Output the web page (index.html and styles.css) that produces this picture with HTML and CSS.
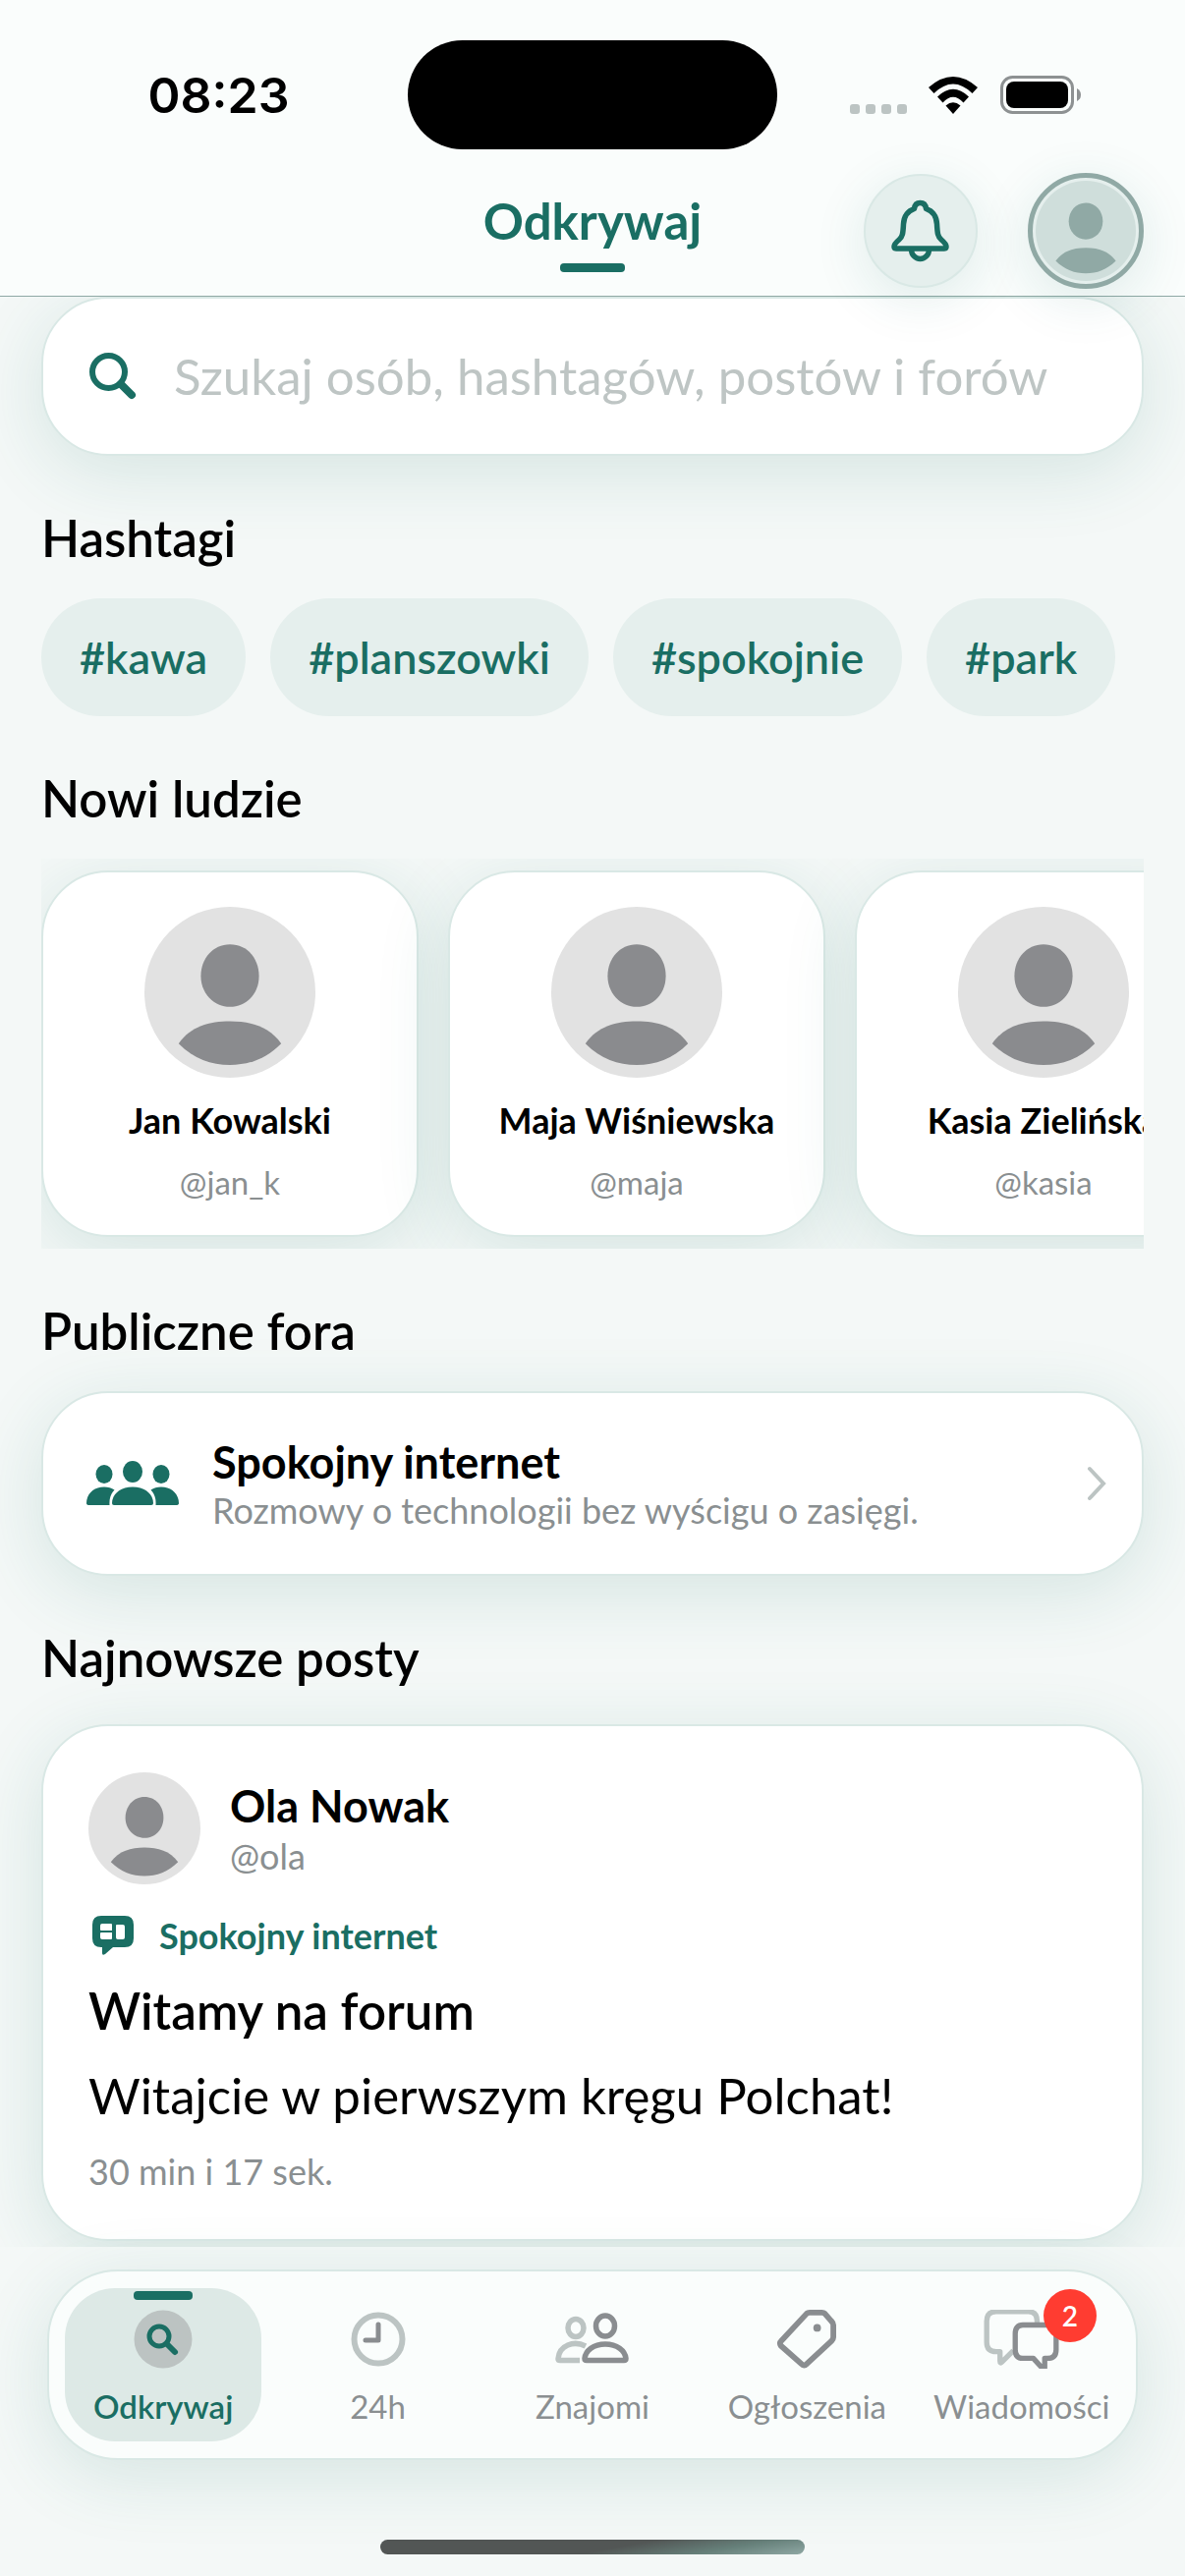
FILE: index.html
```html
<!DOCTYPE html>
<html lang="pl">
<head>
<meta charset="UTF-8">
<meta name="viewport" content="width=device-width, initial-scale=1">
<title>Odkrywaj</title>
<link rel="stylesheet" href="styles.css">
</head>
<body>

<!-- shared shapes -->
<svg class="defs" aria-hidden="true">
  <symbol id="person" viewBox="0 0 100 100">
    <path d="M50 22c10 0 17 8 17 18.500S59.500 58.500 50 58.500 33 50.500 33 40.500 40 22 50 22z"/>
    <path d="M20 80C27 70 38 67 50 67s23 3 30 13c-9 9-19 12.500-30 12.500S29 89 20 80z"/>
  </symbol>
</svg>

<header class="header">
  <div class="status">
    <span class="time">08:23</span>
    <div class="island"></div>
    <div class="status-icons">
      <svg class="signal" viewBox="0 0 58 10"><rect width="10" height="10" rx="3"/><rect x="16" width="10" height="10" rx="3"/><rect x="32" width="10" height="10" rx="3"/><rect x="48" width="10" height="10" rx="3"/></svg>
      <svg class="wifi" viewBox="0 0 50 38">
        <path d="M0 11Q25-11 50 11l-5.500 6Q25-2 5.500 17z"/>
        <path d="M9 20.500Q25 5 41 20.500l-5.500 6Q25 15 14.500 26.500z"/>
        <path d="M17.500 29.500Q25 23 32.500 29.500L25 38z"/>
      </svg>
      <svg class="battery" viewBox="0 0 82 39">
        <rect x="1.500" y="1.500" width="72" height="36" rx="11" fill="none" stroke="#8d9192" stroke-width="3"/>
        <rect x="6" y="6" width="63" height="27" rx="8"/>
        <path d="M78 13q4 2 4 6.500T78 26z" fill="#8d9192"/>
      </svg>
    </div>
  </div>
  <div class="nav">
    <h1 class="title">Odkrywaj</h1>
    <div class="nav-buttons">
      <button class="bell" aria-label="Powiadomienia">
        <svg viewBox="0 0 60 64" fill="none" stroke="currentColor" stroke-width="5.500" stroke-linejoin="round">
          <path d="M23.500 9.500C24 5 26.500 3.500 29.500 3.500S35 5 35.500 9.500C43 12 46 17 46.500 25c.5 10 1 13 4.500 16 3 2.500 5 5 5 7q0 2-2 2H5q-2 0-2-2c0-2 2-4.500 5-7 3.500-3 4-6 4.500-16C13 17 16 12 23.500 9.500z"/>
          <path d="M20.500 51a9 9.500 0 0 0 18 0"/>
        </svg>
      </button>
      <button class="profile" aria-label="Profil"><svg class="avatar"><use href="#person"/></svg></button>
    </div>
  </div>
</header>

<main class="content">
  <div class="card search">
    <label for="q" aria-label="Szukaj">
      <svg class="search-icon" viewBox="0 0 48 48" fill="none" stroke="currentColor">
        <circle cx="19.500" cy="19.500" r="16.500" stroke-width="6"/>
        <path d="M32 32l11 11" stroke-width="8" stroke-linecap="round"/>
      </svg>
    </label>
    <input type="search" id="q" placeholder="Szukaj osób, hashtagów, postów i forów">
  </div>

  <section>
    <h2>Hashtagi</h2>
    <div class="chips">
      <button class="chip">#kawa</button>
      <button class="chip">#planszowki</button>
      <button class="chip">#spokojnie</button>
      <button class="chip">#park</button>
    </div>
  </section>

  <section>
    <h2>Nowi ludzie</h2>
    <div class="people">
      <article class="card person">
        <svg class="avatar"><use href="#person"/></svg>
        <strong>Jan Kowalski</strong>
        <span class="handle">@jan_k</span>
      </article>
      <article class="card person">
        <svg class="avatar"><use href="#person"/></svg>
        <strong>Maja Wiśniewska</strong>
        <span class="handle">@maja</span>
      </article>
      <article class="card person">
        <svg class="avatar"><use href="#person"/></svg>
        <strong>Kasia Zielińska</strong>
        <span class="handle">@kasia</span>
      </article>
    </div>
  </section>

  <section>
    <h2>Publiczne fora</h2>
    <a class="card forum" href="#">
      <svg class="group" viewBox="0 0 94 46">
        <ellipse cx="18" cy="13.500" rx="8.500" ry="9.500"/>
        <ellipse cx="76" cy="13.500" rx="8.500" ry="9.500"/>
        <ellipse cx="47" cy="11" rx="10" ry="11"/>
        <path d="M0 43c0-9 7-16.500 18-16.500 4 0 7.500 1 10.500 3C25 33 23 38 23.500 45H3q-3 0-3-2z"/>
        <path d="M94 43c0-9-7-16.500-18-16.500-4 0-7.500 1-10.500 3C69 33 71 38 70.500 45H91q3 0 3-2z"/>
        <path d="M26 43c0-8 7-16.500 21-16.500S68 35 68 43q0 2-2 2H28q-2 0-2-2z"/>
      </svg>
      <div class="forum-text">
        <strong>Spokojny internet</strong>
        <span class="muted">Rozmowy o technologii bez wyścigu o zasięgi.</span>
      </div>
      <svg class="chevron" viewBox="0 0 20 36"><path d="M3 3l14 15L3 33"/></svg>
    </a>
  </section>

  <section>
    <h2>Najnowsze posty</h2>
    <article class="card post">
      <div class="author">
        <svg class="avatar"><use href="#person"/></svg>
        <div class="author-text">
          <strong>Ola Nowak</strong>
          <span class="muted">@ola</span>
        </div>
      </div>
      <a class="post-forum" href="#">
        <svg viewBox="0 0 42 40"><path fill-rule="evenodd" d="M9 0h24q9 0 9 9v14q0 9-9 9H21l-8 7q-3 2-3-1v-6H9q-9 0-9-9V9q0-9 9-9zm1 8q-2 0-2 2v4q0 1 1 1h11V9q0-1-1-1zm14 2v12q0 2 2 2h5q2 0 2-2V11q0-2-2-2h-6q-1 0-1 1zM9 17q-1 0-1 1v4q0 2 2 2h9q1 0 1-1v-6z"/></svg>
        Spokojny internet
      </a>
      <h3>Witamy na forum</h3>
      <p>Witajcie w pierwszym kręgu Polchat!</p>
      <time class="muted">30 min i 17 sek.</time>
    </article>
  </section>
</main>

<footer class="footer">
  <nav class="tabs">
    <a class="tab active" href="#">
      <svg viewBox="0 0 60 60" fill="none" stroke="currentColor">
        <circle cx="30" cy="30" r="29.500" fill="#bcc3c2" stroke="none"/>
        <circle cx="26" cy="27" r="10" stroke-width="5"/>
        <path d="M34 35l8 8" stroke-width="6" stroke-linecap="round"/>
      </svg>
      Odkrywaj
    </a>
    <a class="tab" href="#">
      <svg viewBox="0 0 60 60" fill="none" stroke-linecap="round" stroke-linejoin="round">
        <circle cx="30" cy="30" r="24.500" stroke="#bcc4c3" stroke-width="6"/>
        <path d="M30 15v16H17" stroke="#8a8d90" stroke-width="5"/>
      </svg>
      24h
    </a>
    <a class="tab" href="#">
      <svg class="wide" viewBox="0 0 80 60" fill="none" stroke-width="5.500" stroke-linejoin="round">
        <g stroke="#bcc4c3">
          <ellipse cx="23" cy="18.500" rx="8" ry="9"/>
          <path d="M33 37c-12-6-27-1-28 13q0 1.500 2 1.500h20"/>
        </g>
        <g stroke="#8a8d90">
          <ellipse cx="53" cy="16.500" rx="9.500" ry="10.500"/>
          <path d="M34 51.500h38q2 0 2-2c-1-8-9-14.500-21-14.500s-20 6.500-21 14.500q0 2 2 2z"/>
        </g>
      </svg>
      Znajomi
    </a>
    <a class="tab" href="#">
      <svg viewBox="0 0 60 62" fill="none" stroke="#8a8d90" stroke-width="6" stroke-linejoin="round">
        <path d="M33 3h13q2 0 3 1l7 8q2 2 2 4v13q0 2-2 4L30 57q-3 3-5.500 0L3 38q-2-3 0-5L30 4q1-1 3-1z"/>
        <circle cx="41" cy="19" r="4" fill="#8a8d90" stroke="none"/>
      </svg>
      Ogłoszenia
    </a>
    <a class="tab" href="#">
      <svg class="wide" viewBox="0 0 80 62" fill="none" stroke-width="5.500" stroke-linejoin="round">
        <path stroke="#bcc4c3" d="M31 43L19 55q-2 2-2-1V44h-4Q3 44 3 34V12Q3 2 13 2h34q9 0 9 10v4"/>
        <path stroke="#8a8d90" d="M41 16h26q9 0 9 9v17q0 9-9 9h-3v10q0 3-2 1L52 51H41q-8 0-8-9V25q0-9 8-9z"/>
      </svg>
      Wiadomości
      <span class="badge">2</span>
    </a>
  </nav>
  <div class="home"></div>
</footer>

</body>
</html>
```
FILE: styles.css
```css
:root {
  --accent: #1a6e63;
  --bg: #f4f8f7;
  --bar: #fafdfc;
  --tint: #e5efed;
  --line: #d9e8e5;
  --muted: #8a8f91;
  --shadow: 0 16px 76px rgba(26, 110, 99, 0.14);
}
* {
  box-sizing: border-box;
}
body {
  margin: 0;
  min-height: 100vh;
  display: flex;
  flex-direction: column;
  background: var(--bg);
  color: #000;
  font-family: Lato, "Liberation Sans", sans-serif;
  font-size: 51px;
  line-height: 62px;
}
h1, h2, h3, p {
  margin: 0;
  font-size: 51px;
  line-height: 62px;
}
h2, h3 {
  font-weight: 600;
}
button, input {
  font: inherit;
  border: none;
  padding: 0;
}
a {
  color: inherit;
  text-decoration: none;
}
svg {
  display: block;
  flex: none;
}
.defs {
  position: absolute;
  width: 0;
  height: 0;
}

/* header */
.header {
  position: relative;
  z-index: 2;
  background: var(--bar);
  border-bottom: 1px solid #8fa9a5;
}
.status {
  display: grid;
  grid-template-columns: 1fr 376px 1fr;
  padding-top: 41px;
}
.time {
  align-self: center;
  padding-right: 70px;
  padding-left: 100px;
  text-align: center;
  font-family: Inter, sans-serif;
  font-weight: 600;
  font-size: 50px;
}
.island {
  height: 111px;
  border-radius: 56px;
  background: #000;
}
.status-icons {
  display: flex;
  align-items: center;
  padding-left: 74px;
}
.signal {
  width: 58px;
  height: 10px;
  margin: 28px 22px 0 0;
  fill: #bcc4c3;
}
.wifi {
  width: 50px;
  height: 38px;
  margin-right: 23px;
}
.battery {
  width: 82px;
  height: 39px;
}
.nav {
  display: grid;
  grid-template-columns: 1fr auto 1fr;
  align-items: start;
  padding: 24px 42px 7px;
}
.title {
  grid-column: 2;
  padding-top: 18px;
  color: var(--accent);
  font-weight: 700;
}
.title::after {
  content: "";
  display: block;
  width: 66px;
  height: 9px;
  margin: 12px auto 0;
  border-radius: 4px;
  background: var(--accent);
}
.nav-buttons {
  display: flex;
  justify-content: flex-end;
  align-items: center;
  gap: 51px;
}
.bell, .profile {
  display: grid;
  place-items: center;
  width: 116px;
  height: 116px;
  border-radius: 50%;
  background: var(--tint);
  box-shadow: 0 12px 54px rgba(26, 110, 99, 0.12);
}
.bell {
  border: 2px solid var(--line);
  color: var(--accent);
}
.bell svg {
  width: 60px;
  height: 64px;
}
.profile {
  width: 118px;
  height: 118px;
  border: 5px solid #90a9a5;
}
.avatar {
  border-radius: 50%;
  background: #e2e2e2;
  fill: #8a8b8e;
}
.profile .avatar {
  width: 102px;
  height: 102px;
  background: #cfdedb;
  fill: #90a9a5;
}

/* content */
.content {
  flex: 1;
  display: flex;
  flex-direction: column;
  gap: 53px;
  padding: 0 42px 6px;
  overflow: hidden;
}
.card {
  background: #fff;
  border: 2px solid var(--line);
  border-radius: 68px;
  box-shadow: var(--shadow);
}
section {
  display: flex;
  flex-direction: column;
  gap: 30px;
}
.search {
  display: flex;
  align-items: center;
  gap: 38px;
  padding: 48px 47px;
}
.search-icon {
  width: 48px;
  height: 48px;
  color: var(--accent);
}
.search input {
  flex: 1;
  min-width: 0;
  height: 62px;
  background: none;
  outline: none;
}
.search input::placeholder {
  color: #bec5c4;
  opacity: 1;
}
.chips {
  display: flex;
  gap: 25px;
}
.chip {
  padding: 33px 39px;
  border-radius: 60px;
  background: var(--tint);
  color: var(--accent);
  font-size: 45px;
  line-height: 54px;
  font-weight: 600;
}
.people {
  display: flex;
  gap: 30px;
  padding: 12px 0;
  overflow: hidden;
}
.person {
  flex: none;
  width: 384px;
  display: flex;
  flex-direction: column;
  align-items: center;
  gap: 21px;
  padding: 35px 0 34px;
}
.person .avatar {
  width: 174px;
  height: 174px;
}
.person strong {
  font-size: 36px;
  line-height: 44px;
}
.handle {
  color: var(--muted);
  font-size: 33px;
  line-height: 40px;
}
.muted {
  color: var(--muted);
  font-size: 36px;
  line-height: 44px;
}
.forum {
  display: flex;
  align-items: center;
  padding: 43px 36px 43px 44px;
}
.group {
  width: 94px;
  height: 46px;
  margin-right: 34px;
  fill: var(--accent);
}
.forum-text {
  flex: 1;
  display: flex;
  flex-direction: column;
}
.forum-text strong, .author strong {
  font-size: 45px;
  line-height: 54px;
}
.chevron {
  width: 20px;
  height: 36px;
  fill: none;
  stroke: #bcc4c3;
  stroke-width: 4;
  stroke-linecap: round;
}
.post {
  display: flex;
  flex-direction: column;
  gap: 24px;
  margin-top: 6px;
  padding: 47px 46px;
}
.author {
  display: flex;
  align-items: center;
  gap: 30px;
  margin-bottom: 6px;
}
.author .avatar {
  width: 114px;
  height: 114px;
}
.author-text {
  display: flex;
  flex-direction: column;
  gap: 2px;
}
.post-forum {
  display: flex;
  align-items: center;
  gap: 26px;
  padding-left: 4px;
  color: var(--accent);
  font-size: 36px;
  line-height: 44px;
  font-weight: 700;
}
.post-forum svg {
  width: 42px;
  height: 40px;
  fill: currentColor;
}

/* bottom bar */
.footer {
  position: relative;
  padding: 23px 48px 24px;
}
.tabs {
  display: grid;
  grid-template-columns: repeat(5, 1fr);
  gap: 18px;
  padding: 17px 16px;
  background: var(--bar);
  border: 2px solid var(--line);
  border-radius: 72px;
  box-shadow: var(--shadow);
}
.tab {
  position: relative;
  display: flex;
  flex-direction: column;
  align-items: center;
  gap: 18px;
  padding: 22px 0 16px;
  border-radius: 51px;
  color: var(--muted);
  font-size: 33px;
  line-height: 40px;
}
.tab svg {
  width: 60px;
  height: 60px;
}
.tab .wide {
  width: 80px;
}
.tab.active {
  background: #dde9e6;
  color: var(--accent);
  font-weight: 600;
}
.tab.active::before {
  content: "";
  position: absolute;
  top: 3px;
  width: 60px;
  height: 9px;
  border-radius: 4px;
  background: var(--accent);
}
.badge {
  position: absolute;
  top: 1px;
  right: 24px;
  width: 54px;
  height: 54px;
  border-radius: 50%;
  background: #ff3c31;
  color: #fff;
  font-size: 28px;
  line-height: 54px;
  font-weight: 600;
  text-align: center;
}
.home {
  position: relative;
  width: 432px;
  height: 15px;
  margin: 81px auto 0;
  border-radius: 8px;
  background: linear-gradient(170deg, #525655 55%, #66807a 78%, #8fa8a4);
}
```
